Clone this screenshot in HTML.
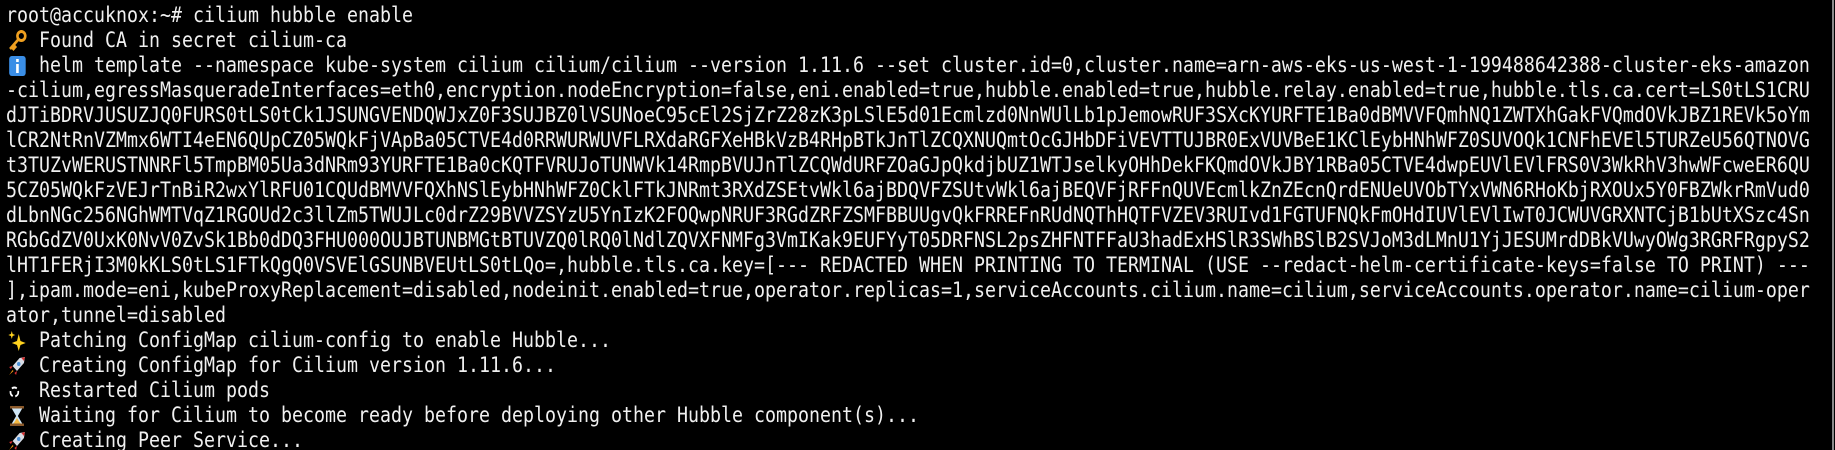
<!DOCTYPE html>
<html><head><meta charset="utf-8"><style>
html,body{margin:0;padding:0;background:#000;width:1835px;height:450px;overflow:hidden;position:relative}
pre{position:absolute;left:6px;top:3px;margin:0;font-family:"DejaVu Sans Mono","Liberation Mono",monospace;font-size:21px;line-height:25px;color:#f0f0f0;transform:scaleX(0.87);transform-origin:0 0;white-space:pre}
.e{display:inline-block;width:2ch;height:25px;vertical-align:top;position:relative}
.e svg{position:absolute;left:0;top:2px;width:2ch;height:22px}
.bar{position:absolute;left:1832px;top:0;width:2px;height:450px;background:#8a8a8a}
</style></head><body>
<pre>root@accuknox:~# cilium hubble enable
<span class="e"><svg viewBox="0 0 22 22"><circle cx="16" cy="6" r="4.5" fill="none" stroke="#f0a020" stroke-width="3"/><path d="M13 9 L3 19 M5 17 L8 20 M7 15 L10 18" stroke="#f0a020" stroke-width="3" fill="none"/></svg></span> Found CA in secret cilium-ca
<span class="e"><svg viewBox="0 0 22 22"><rect x="2" y="1" width="19" height="20" rx="3" fill="#3a8ee6"/><rect x="10" y="9" width="3" height="9" fill="#fff"/><rect x="10" y="4" width="3" height="3" fill="#fff"/></svg></span> helm template --namespace kube-system cilium cilium/cilium --version 1.11.6 --set cluster.id=0,cluster.name=arn-aws-eks-us-west-1-199488642388-cluster-eks-amazon
-cilium,egressMasqueradeInterfaces=eth0,encryption.nodeEncryption=false,eni.enabled=true,hubble.enabled=true,hubble.relay.enabled=true,hubble.tls.ca.cert=LS0tLS1CRU
dJTiBDRVJUSUZJQ0FURS0tLS0tCk1JSUNGVENDQWJxZ0F3SUJBZ0lVSUNoeC95cEl2SjZrZ28zK3pLSlE5d01Ecmlzd0NnWUlLb1pJemowRUF3SXcKYURFTE1Ba0dBMVVFQmhNQ1ZWTXhGakFVQmdOVkJBZ1REVk5oYm
lCR2NtRnVZMmx6WTI4eEN6QUpCZ05WQkFjVApBa05CTVE4d0RRWURWUVFLRXdaRGFXeHBkVzB4RHpBTkJnTlZCQXNUQmtOcGJHbDFiVEVTTUJBR0ExVUVBeE1KClEybHNhWFZ0SUVOQk1CNFhEVEl5TURZeU56QTNOVG
t3TUZvWERUSTNNRFl5TmpBM05Ua3dNRm93YURFTE1Ba0cKQTFVRUJoTUNWVk14RmpBVUJnTlZCQWdURFZOaGJpQkdjbUZ1WTJselkyOHhDekFKQmdOVkJBY1RBa05CTVE4dwpEUVlEVlFRS0V3WkRhV3hwWFcweER6QU
5CZ05WQkFzVEJrTnBiR2wxYlRFU01CQUdBMVVFQXhNSlEybHNhWFZ0CklFTkJNRmt3RXdZSEtvWkl6ajBDQVFZSUtvWkl6ajBEQVFjRFFnQUVEcmlkZnZEcnQrdENUeUVObTYxVWN6RHoKbjRXOUx5Y0FBZWkrRmVud0
dLbnNGc256NGhWMTVqZ1RGOUd2c3llZm5TWUJLc0drZ29BVVZSYzU5YnIzK2FOQwpNRUF3RGdZRFZSMFBBUUgvQkFRREFnRUdNQThHQTFVZEV3RUIvd1FGTUFNQkFmOHdIUVlEVlIwT0JCWUVGRXNTCjB1bUtXSzc4Sn
RGbGdZV0UxK0NvV0ZvSk1Bb0dDQ3FHU000OUJBTUNBMGtBTUVZQ0lRQ0lNdlZQVXFNMFg3VmIKak9EUFYyT05DRFNSL2psZHFNTFFaU3hadExHSlR3SWhBSlB2SVJoM3dLMnU1YjJESUMrdDBkVUwyOWg3RGRFRgpyS2
lHT1FERjI3M0kKLS0tLS1FTkQgQ0VSVElGSUNBVEUtLS0tLQo=,hubble.tls.ca.key=[--- REDACTED WHEN PRINTING TO TERMINAL (USE --redact-helm-certificate-keys=false TO PRINT) ---
],ipam.mode=eni,kubeProxyReplacement=disabled,nodeinit.enabled=true,operator.replicas=1,serviceAccounts.cilium.name=cilium,serviceAccounts.operator.name=cilium-oper
ator,tunnel=disabled
<span class="e"><svg viewBox="0 0 22 22"><path d="M13 4 L15 11 L21 13 L15 15 L13 21 L11 15 L5 13 L11 11 Z" fill="#ffd21f"/><path d="M5 1 L6 4 L9 5 L6 6 L5 9 L4 6 L1 5 L4 4 Z" fill="#ffd21f"/></svg></span> Patching ConfigMap cilium-config to enable Hubble...
<span class="e"><svg viewBox="0 0 22 22"><path d="M20 2 L14 3 L6 11 L11 16 L19 8 Z" fill="#d8dde6"/><path d="M20 2 L16 3 L19 6 Z" fill="#e03030"/><circle cx="13" cy="9" r="2" fill="#4a90d9"/><path d="M6 11 L2 12 L4 14 Z M11 16 L10 20 L8 18 Z" fill="#e03030"/><path d="M6 15 L2 20 L7 16 Z" fill="#f39c12"/></svg></span> Creating ConfigMap for Cilium version 1.11.6...
<span class="e"><svg viewBox="0 0 22 22"><circle cx="8" cy="12" r="4.5" fill="none" stroke="#fff" stroke-width="2" stroke-dasharray="6 3"/></svg></span> Restarted Cilium pods
<span class="e"><svg viewBox="0 0 22 22"><rect x="3" y="1" width="16" height="2.5" fill="#8b5a2b"/><rect x="3" y="18.5" width="16" height="2.5" fill="#8b5a2b"/><path d="M5 3.5 L17 3.5 L12 11 L17 18.5 L5 18.5 L10 11 Z" fill="#cfe6f5"/><path d="M7 18.5 L15 18.5 L11 13 Z" fill="#f5b942"/></svg></span> Waiting for Cilium to become ready before deploying other Hubble component(s)...
<span class="e"><svg viewBox="0 0 22 22"><path d="M20 2 L14 3 L6 11 L11 16 L19 8 Z" fill="#d8dde6"/><path d="M20 2 L16 3 L19 6 Z" fill="#e03030"/><circle cx="13" cy="9" r="2" fill="#4a90d9"/><path d="M6 11 L2 12 L4 14 Z M11 16 L10 20 L8 18 Z" fill="#e03030"/><path d="M6 15 L2 20 L7 16 Z" fill="#f39c12"/></svg></span> Creating Peer Service...</pre>
<div class="bar"></div>
</body></html>
